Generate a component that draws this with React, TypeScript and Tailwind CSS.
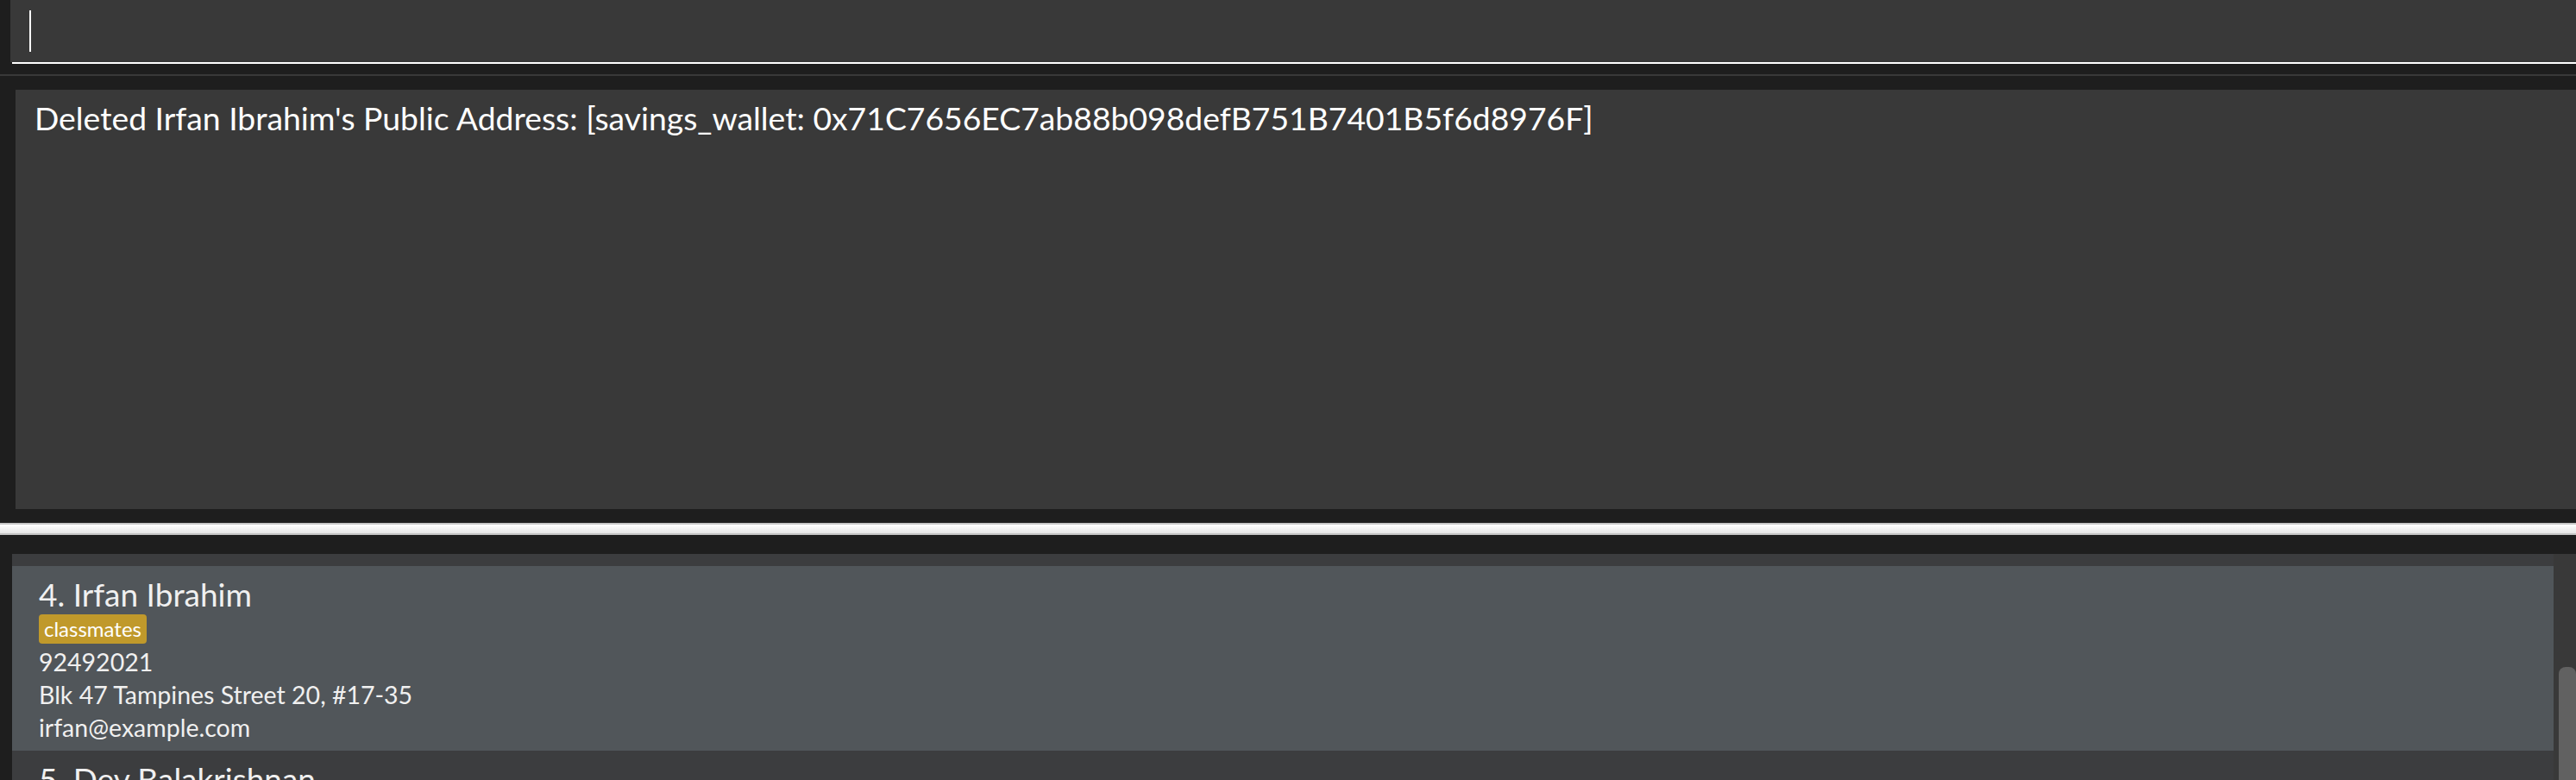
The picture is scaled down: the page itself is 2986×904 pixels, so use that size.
import React from "react";

const font = { fontFamily: '"Comic Sans MS", Lato, "DejaVu Sans", sans-serif' };

function PersonCard({
  index,
  name,
  tags,
  phone,
  address,
  email,
  selected,
}: {
  index: number;
  name: string;
  tags: string[];
  phone: string;
  address: string;
  email: string;
  selected?: boolean;
}) {
  return (
    <div className={`${selected ? "bg-[#51565a]" : "bg-[#3c3d3f]"} h-[214px] shrink-0 pl-[31px] pt-[12px] text-[#f0f0f0]`}>
      <div className="text-[37px] leading-[42px]">
        {index}. {name}
      </div>
      <div className="flex gap-2 mt-[2px]">
        {tags.map((t) => (
          <span key={t} className="h-[34px] px-[6px] rounded-[4px] bg-[#c0992b] text-[24px] leading-[34px] text-white">
            {t}
          </span>
        ))}
      </div>
      <div className="text-[28.5px] leading-[38px] mt-[2px]">{phone}</div>
      <div className="text-[28.5px] leading-[38px]">{address}</div>
      <div className="text-[28.5px] leading-[38px]">{email}</div>
    </div>
  );
}

export default function App() {
  return (
    <div className="w-full h-[904px] bg-[#1e1e1e] flex flex-col overflow-hidden" style={font}>
      {/* command box */}
      <div className="pl-[12px] shrink-0">
        <div className="h-[72px] bg-[#393939] pt-[12px] pl-[22px]">
          <div className="w-[2px] h-[48px] bg-white" />
        </div>
        <div className="ml-[2px] h-[2px] bg-white" />
      </div>
      <div className="h-[12px] shrink-0" />
      <div className="h-[2px] bg-[#393939] shrink-0" />
      <div className="h-[16px] shrink-0" />

      {/* result display */}
      <div className="ml-[18px] h-[486px] shrink-0 bg-[#393939] pl-[22px] pt-[10px] text-white text-[37.3px] leading-[46px]">
        Deleted Irfan Ibrahim's Public Address: [savings_wallet: 0x71C7656EC7ab88b098defB751B7401B5f6d8976F]
      </div>
      <div className="h-[16px] shrink-0" />

      {/* splitter */}
      <div className="h-[14px] shrink-0 border-y-2 border-[#c6c6c6] bg-gradient-to-b from-white to-[#e6e6e6]" />
      <div className="h-[22px] shrink-0" />

      {/* person list */}
      <div className="ml-[14px] flex-1 flex min-h-0">
        <div className="flex-1 bg-[#3c3d3f] flex flex-col overflow-hidden">
          <div className="h-[14px] shrink-0" />
          <PersonCard
            index={4}
            name="Irfan Ibrahim"
            tags={["classmates"]}
            phone="92492021"
            address="Blk 47 Tampines Street 20, #17-35"
            email="irfan@example.com"
            selected
          />
          <PersonCard
            index={5}
            name="Dev Balakrishnan"
            tags={["colleagues"]}
            phone="93210283"
            address="Blk 45 Aljunied Street 85, #11-31"
            email="dev@example.com"
          />
        </div>
        <div className="w-[26px] bg-[#393939] flex flex-col pl-[6px] pt-[131px]">
          <div className="flex-1 bg-[#616161] rounded-t-[8px]" />
        </div>
      </div>
    </div>
  );
}
